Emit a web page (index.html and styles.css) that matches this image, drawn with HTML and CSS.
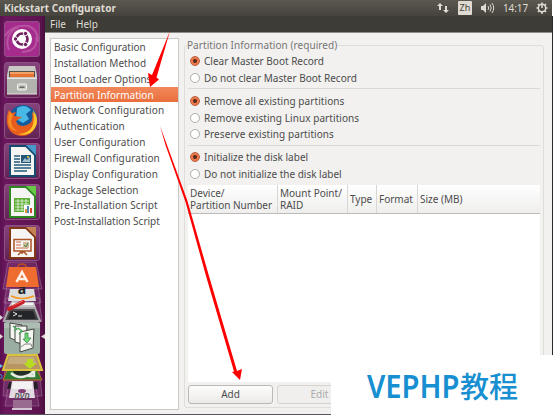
FILE: index.html
```html
<!DOCTYPE html>
<html lang="en">
<head>
<meta charset="utf-8">
<title>Kickstart Configurator</title>
<link rel="stylesheet" href="styles.css">
</head>
<body>
<div class="desktop">
  <header class="panel">
    <span class="panel-title">Kickstart Configurator</span>
    <div class="indicators">
      <svg class="net" viewBox="0 0 12 12" width="12" height="12"><path d="M0 4 3 1 6 4H4V8H2V4ZM6 8H8V4H10V8H12L9 11Z"/></svg>
      <span class="lang">Zh</span>
      <svg class="sound" viewBox="0 0 15 12" width="15" height="12"><path d="M1 4H3L6 1V11L3 8H1Z"/><path class="wave" d="M8 4Q9.5 6 8 8M10 2.5Q12.5 6 10 9.500M12 1Q15.500 6 12 11"/></svg>
      <span class="clock">14:17</span>
      <svg class="gear" viewBox="0 0 12 12" width="12" height="12"><circle cx="6" cy="6" r="3.700"/><path d="M6 .5V6M6 10V12M.5 6H2.500M9.500 6H11.500M2 2 3.500 3.500M10 2 8.500 3.500M2 10 3.500 8.500M10 10 8.500 8.500"/></svg>
    </div>
  </header>
  <div class="workspace">
    <nav class="launcher">
      <div class="tile dash"><svg viewBox="0 0 36 36"><path class="swirl" d="M1 15Q8 3 24 5Q34 8 34 21M5 29Q-1 14 14 6M32 16Q35 30 18 31"/><circle cx="18" cy="18" r="10" fill="#fff"/><circle cx="18" cy="18" r="5.500" fill="none" stroke="#70205d" stroke-width="2.700"/><g fill="#70205d" stroke="#fff"><circle cx="11.500" cy="18" r="2.200"/><circle cx="21.500" cy="12.500" r="2.200"/><circle cx="21.500" cy="23.500" r="2.200"/></g></svg></div>
      <div class="tile"><svg viewBox="0 0 36 36"><path d="M5 4H31L33 13V32H3V13Z" fill="#c9c8c5"/><path d="M5 9H31V15H5Z" fill="#55504b"/><path d="M6 10H30V15H6Z" fill="#e87331"/><path d="M6 11H30" stroke="#ffd0a0"/><path d="M3 16H33V32H3Z" fill="#b2b2af"/><path d="M3 16.500H33M3 32H33" stroke="#e6e5e2"/><rect x="13.500" y="22" width="9" height="6" rx="1" fill="#c7c7c4" stroke="#f3f3f0"/><path d="M15.500 24.500H20.500V26H15.500Z" fill="#666"/></svg></div>
      <div class="tile"><svg viewBox="0 0 36 36"><circle cx="19" cy="16" r="14" fill="#155a9b"/><path d="M13 5Q21 0 27 7L22 11 25 16 19 20 12 16Z" fill="#48b9e6"/><path d="M5 7 8 10 12 9 10 13 18 14 12 18Q14 25 23 22Q30 20 28 9Q35 15 32 23Q28 33 17 33Q5 32 3 20Q2 13 5 7Z" fill="#e75d1d"/><path d="M29 7Q36 16 31 25Q25 34 14 31Q24 31 28 24Q31 18 29 7Z" fill="#ffc629"/><path d="M5 8 9 12 7 18Q8 26 14 28Q5 28 4 19Z" fill="#f68b24"/></svg></div>
      <div class="tile writer"><svg viewBox="0 0 36 36"><path class="doc" d="M6 3H22L31 12V33H6Z"/><path class="corner" d="M22 2H32V12Z"/><path class="accent-line" d="M10 13H16M10 16H16M10 19H16M10 22H27M10 25H27M10 28H23" /><path d="M17 12H27V20H17Z" fill="#245678"/><path d="M18 19 21 15 23 17 26 14V19Z" fill="#a5bec7"/><circle cx="24" cy="14" r="1" fill="#f4d34d"/></svg></div>
      <div class="tile calc"><svg viewBox="0 0 36 36"><path class="doc" d="M6 3H22L31 12V33H6Z"/><path class="corner" d="M22 2H32V12Z"/><path d="M10 14H26V28H10Z" fill="#5cae35"/><path d="M11 17H25M11 20H25M11 23H25M11 26H25M14 15V27M18 15V27M22 15V27" stroke="#e8f6e2" stroke-width=".8"/><path d="M20 21H28V29H20Z" fill="#fff"/><path d="M21 25H23V29H21Z" fill="#e49637"/><path d="M23 22H25V29H23Z" fill="#4b89b8"/><path d="M26 24H28V29H26Z" fill="#d94a2b"/></svg></div>
      <div class="tile impress"><svg viewBox="0 0 36 36"><path class="doc" d="M6 3H22L31 12V33H6Z"/><path class="corner" d="M22 2H32V12Z"/><path d="M10 14.500H27V26H10ZM18 26V29M14 30 17 27H20L23 30" fill="none" stroke="#ad5427" stroke-width="1.500"/><path d="M12 17H17M12 20H17M12 23H24" stroke="#cb6841"/><path d="M19 17H25V23H19Z" fill="#d4ba99"/><path d="M20 20 22 22 24 18" stroke="#39814b" fill="none"/></svg></div>
      <svg class="stack" viewBox="0 0 45 155" width="45" height="155">
        <path class="glass" d="M8 1H36L42 28H3ZM8 20H37L41 42H4ZM6 37H39L42 60H3ZM5 106H39L42 135H3ZM9 121H35L39 145H5Z"/>
        <path d="M10 28H34L36 40H8Z" fill="#dedddd"/><text x="22" y="33" class="amazon">a</text><path d="M11 35Q22 40 34 35" fill="none" stroke="#f39a22" stroke-width="1.500"/>
        <path d="M9 6H36L39 26H6Z" fill="#ef6c31"/><path d="M18 6Q18 3 22 3Q26 3 26 6" fill="none" stroke="#bd4e24" stroke-width="1.500"/><path d="M16.500 21 22 11 27.500 21M17 18H27" fill="none" stroke="#fff3e9" stroke-width="2.500"/>
        <path d="M12 40 34 41 36 47H8Z" fill="#c7c5c8"/><path d="M12 43H33" stroke="#f6f4f2" stroke-width="2"/>
        <path d="M9 47H35L40 60H4Z" fill="#4b484b" stroke="#aaa7aa" stroke-width="2"/><path d="M11 50H33L36 58H8Z" fill="#242529"/><path d="M13 51 17 53 13 55M18 55H22" fill="none" stroke="#e9e7e6"/>
        <path d="M9 48 23 41" stroke="#c91e24" stroke-width="4" stroke-linecap="round"/><path d="M12 45 23 40" stroke="#ee6963"/>
        <rect x="4" y="61" width="36" height="32" rx="2" fill="#9aaea1"/><path d="M4 62H40V67H4Z" fill="#afbcb3"/>
        <g fill="#f5f5f1" stroke="#404641"><path d="M10 62 22 64 20 81 10 77Z"/><path d="M15 65 27 65 26 84 15 81Z"/><path d="M20 71 34 68 33 87 20 91Z"/></g><path d="M25 72H28V77H31L27 82 23 78H25Z" fill="#70d875" stroke="#297d3d" stroke-width=".7"/><path d="M13 65 17 68 14 70M18 67 22 70 19 73" stroke="#4ba65a" fill="none" stroke-width="1.500"/><path d="M21 86 25 83 31 83 32 86" fill="none" stroke="#888"/>
        <path d="M8 107H36L42 119H3Z" fill="#2f7a32" stroke="#c36a28"/><circle cx="22" cy="108" r="9" fill="#242e27"/><path d="M11 112Q20 120 32 112L34 109V115L28 115" stroke="#e8ebe3" stroke-width="2.500" fill="none"/>
        <path d="M8 94H37L42 109H3Z" fill="#b89663" stroke="#dac23d" stroke-width="2"/><path d="M10 96H34L37 103H7Z" fill="#c5aa7e"/><path d="M27 98H33V102H37L30 108 23 102H27Z" fill="#b7dd22"/>
        <path d="M9 121H12L11 128H7ZM34 121H37L38 128H34Z" fill="#242126"/><path d="M12 120H33L35 137H9Z" fill="#e2dbe1"/><path d="M13 121H32V128H12Z" fill="#f4f1f2"/><ellipse cx="22" cy="130" rx="4" ry="2" fill="#843c73"/><text x="22" y="138" class="dvd">DVD</text>
        <path d="M13 139H32V149H13Z" fill="#9a6b91"/><path d="M12 148H32" stroke="#d4c3d0" stroke-width="2"/>
        <path d="M0 54 3 56.500 0 59ZM0 73 3 75.500 0 78ZM45 73 41 75.500 45 78Z" fill="#e0dadd"/><path d="M0 103 3 105 0 107Z" fill="#62bce8"/><circle cx="0" cy="115.500" r="2" fill="none" stroke="#4997c8"/>
      </svg>
    </nav>
    <main class="window">
      <div class="menubar"><span>File</span><span>Help</span></div>
      <div class="content">
        <ul class="sections">
          <li>Basic Configuration</li><li>Installation Method</li><li>Boot Loader Options</li><li class="selected">Partition Information</li><li class="wide">Network Configuration</li><li class="wide">Authentication</li><li class="wide">User Configuration</li><li class="wide">Firewall Configuration</li><li class="wide">Display Configuration</li><li>Package Selection</li><li class="wide">Pre-Installation Script</li><li>Post-Installation Script</li>
        </ul>
        <fieldset class="partition">
          <legend>Partition Information (required)</legend>
          <div class="choices mbr"><label><i class="radio on"></i><span>Clear Master Boot Record</span></label><label><i class="radio"></i><span>Do not clear Master Boot Record</span></label></div>
          <div class="choices existing"><label><i class="radio on"></i><span>Remove all existing partitions</span></label><label><i class="radio"></i><span>Remove existing Linux partitions</span></label><label><i class="radio"></i><span>Preserve existing partitions</span></label></div>
          <div class="choices disk"><label><i class="radio on"></i><span>Initialize the disk label</span></label><label><i class="radio"></i><span>Do not initialize the disk label</span></label></div>
          <div class="table"><div class="thead"><span>Device/<br>Partition Number</span><span>Mount Point/<br>RAID</span><span>Type</span><span>Format</span><span>Size (MB)</span></div></div>
          <div class="actions"><div class="button">Add</div><div class="button disabled">Edit</div></div>
        </fieldset>
      </div>
    </main>
  </div>
  <svg class="arrows" viewBox="0 0 554 416" width="554" height="416"><path d="M170 31 156.500 77.500 159 79.500 150 87 148 73 152 75Z"/><path d="M160 126 167 145 187.500 201 209 276 237 371 242 369 240 380 232 372 234 371.500 206 276 185.500 202 165.500 145Z"/></svg>
  <div class="watermark"><span class="brand">VEPHP</span><span class="course">教程</span></div>
</div>
</body>
</html>
```
FILE: styles.css
```css
* { box-sizing: border-box; }
body { margin: 0; background: #fff; font: 10px/16px "Noto Sans", "Noto Sans CJK SC", sans-serif; color: #4c4c4c; }
.desktop { position: relative; width: 554px; height: 416px; overflow: hidden; }
.panel { width: 552px; height: 16px; display: flex; justify-content: space-between; background: linear-gradient(#5b584f, #45433d); color: #dfdbd2; padding: 0 4px; }
.panel-title { font-weight: 700; }
.indicators { display: flex; align-items: center; fill: #dfdbd2; stroke: none; }
.net { margin-right: 9px; }
.lang { width: 14px; height: 14px; background: #dfdbd2; color: #484640; font-size: 9px; line-height: 14px; text-align: center; border-radius: 1px; margin-right: 8px; }
.sound { margin-right: 8px; }
.wave { fill: none; stroke: #dfdbd2; }
.clock { margin-right: 8px; letter-spacing: -.1px; }
.gear { fill: none; stroke: #dfdbd2; stroke-width: 1.5; }
.workspace { display: flex; width: 553px; height: 399px; border-right: 1px solid #292929; border-bottom: 1px solid #55555b; }
.launcher { width: 45px; flex: none; height: 398px; padding-top: 5px; background: linear-gradient(90deg, #5a104f, #6a175d 12%, #5d134f 88%, #4a0d3e); overflow: hidden; }
.tile { width: 36px; height: 36px; margin: 0 auto 4.8px 4px; border: 1px solid #8e5084; border-radius: 3px; background: linear-gradient(#85437b, #642154); }
.tile svg { width: 36px; height: 36px; display: block; margin: -1px; }
.dash { background: #a52c8c; }
.swirl { fill: none; stroke: #c36caf; stroke-width: 2; opacity: .6; }
.doc { fill: #f6f5f3; stroke: var(--accent); stroke-width: 2; }
.corner { fill: var(--light); }
.writer { --accent: #164b70; --light: #4699c9; }
.calc { --accent: #2f8625; --light: #69c845; }
.impress { --accent: #813715; --light: #c58254; }
.accent-line { stroke: #235b7e; stroke-width: 1.5; }
.stack { display: block; margin-top: -5px; }
.glass { fill: #ffffff16; stroke: #ffffff35; }
.amazon { font: bold 14px "Noto Sans", sans-serif; text-anchor: middle; fill: #222; }
.dvd { font: italic bold 8px "Noto Sans", sans-serif; text-anchor: middle; fill: #625c65; }
.window { flex: 1; background: #f2f1ef; }
.menubar { height: 17px; background: #3d3c37; border-bottom: 1px solid #8d8c89; display: flex; gap: 10px; padding-left: 5px; color: #dfdbd2; }
.content { display: flex; height: 381px; padding: 5px 8px 0 5px; }
.sections { width: 129px; height: 372px; flex: none; margin: 0 5px 0 0; padding: 0; list-style: none; background: #fff; border: 1px solid #cac9c5; }
.sections li { height: 15.85px; line-height: 16px; padding-left: 3px; white-space: nowrap; }
.sections .wide { letter-spacing: .12px; }
.sections .selected { background: linear-gradient(#f1885b, #ea6f3c); color: #fff; }
.partition { width: 360px; height: 370px; margin: 0; padding: 0 3px; border: 1px solid #deddda; border-radius: 3px; min-width: 0; }
.partition legend { height: 14px; line-height: 14px; padding: 0; margin-left: -1px; color: #757575; white-space: nowrap; letter-spacing: .06px; }
.choices { border-bottom: 1px solid #d9d8d5; }
.choices label { display: flex; align-items: center; height: 16.5px; line-height: 16px; gap: 4px; padding-left: 2px; white-space: nowrap; }
.mbr { height: 37px; padding-top: 1px; }
.existing { height: 57px; padding-top: 4px; letter-spacing: .07px; }
.disk { height: 39px; padding-top: 3px; border: 0; }
.radio { width: 10px; height: 10px; border: 1px solid #b0afac; border-radius: 50%; background: #fff; }
.radio.on { border-color: #b85f3d; background: radial-gradient(circle, #5a2d1d 0 1.5px, #ed764a 2.5px); }
.table { height: 197px; background: #fff; }
.thead { display: grid; grid-template-columns: 90px 70px 29px 41px 1fr; height: 29px; background: linear-gradient(#fff, #efeeed); border-bottom: 1px solid #bbb; line-height: 12px; }
.thead span { display: flex; align-items: center; padding-left: 2px; border-right: 1px solid #d8d7d4; white-space: nowrap; }
.thead span:last-child { border: 0; }
.actions { display: flex; gap: 4px; padding-top: 3px; }
.button { width: 85px; height: 19px; border: 1px solid #b9b8b5; border-radius: 3px; background: linear-gradient(#fdfdfd, #eceae8); text-align: center; line-height: 17px; }
.disabled { background: #f0efed; border-color: #d4d3d0; color: #aaa; }
.arrows { position: absolute; inset: 0; fill: #f00; }
.watermark { position: absolute; left: 331px; top: 355px; width: 223px; height: 61px; padding-left: 36px; background: #fff; color: #178fd1; display: flex; align-items: baseline; line-height: 61px; white-space: nowrap; }
.brand { width: 93px; font-family: "Noto Sans", sans-serif; font-size: 32px; font-weight: 600; transform: scaleX(.91); transform-origin: left; }
.course { font-family: "Noto Sans CJK SC", sans-serif; font-size: 29px; font-weight: 500; }
```
